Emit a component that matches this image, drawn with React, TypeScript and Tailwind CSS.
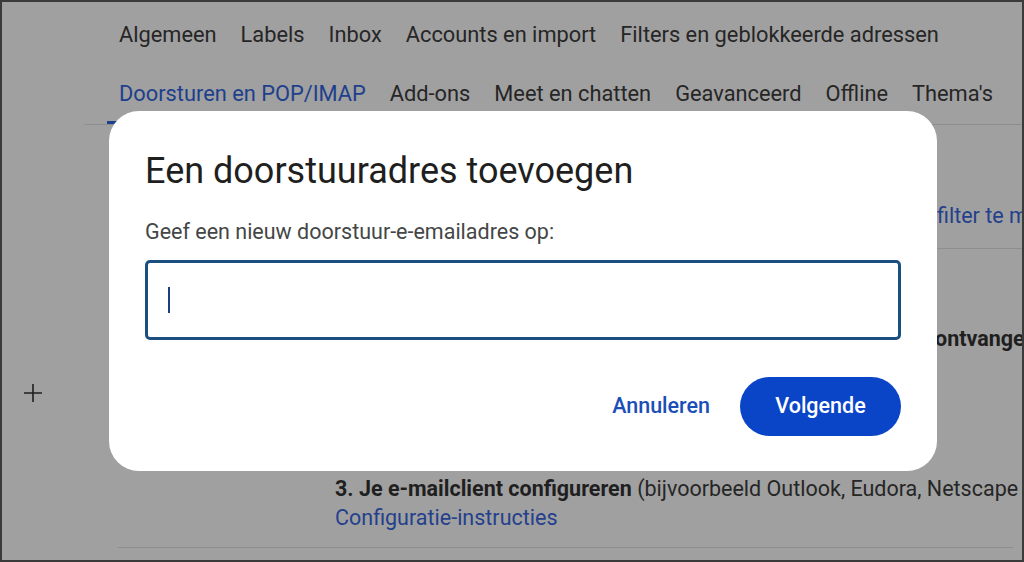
const topTabs = ["Algemeen", "Labels", "Inbox", "Accounts en import", "Filters en geblokkeerde adressen"];
const subTabs = ["Doorsturen en POP/IMAP", "Add-ons", "Meet en chatten", "Geavanceerd", "Offline", "Thema's"];

function PlusIcon() {
  return (
    <svg width="20" height="20" viewBox="0 0 20 20" fill="none" stroke="#1f1f1f" strokeWidth="1.6">
      <path d="M10 1v18M1 10h18" />
    </svg>
  );
}

function ForwardDialog() {
  return (
    <div className="absolute left-[107px] top-[109px] w-[828px] h-[360px] rounded-[30px] bg-white px-[36px] pt-[38px] font-['Roboto',sans-serif]">
      <h2 className="text-[36px] leading-[44px] text-[#1f1f1f] font-normal">Een doorstuuradres toevoegen</h2>
      <p className="mt-[26px] text-[21.5px] leading-[26px] text-[#444746]">Geef een nieuw doorstuur-e-emailadres op:</p>
      <div className="mt-[15px] h-[80px] w-[756px] rounded-[5px] border-[3px] border-[#1b4f80] flex items-center pl-[20px]">
        <span className="block w-[2px] h-[26px] bg-[#1b3f80]" />
      </div>
      <div className="mt-[37px] flex items-center justify-end gap-[30px]">
        <button className="text-[21.5px] font-medium text-[#1b4fb8]">Annuleren</button>
        <button className="h-[59px] w-[161px] rounded-full bg-[#0a45c8] text-[21.5px] font-medium text-white">Volgende</button>
      </div>
    </div>
  );
}

export default function App() {
  return (
    <div className="relative w-[1024px] h-[562px] overflow-hidden border-2 border-[#3a3a3a] bg-[#a0a0a0] font-['Roboto',sans-serif] text-[#262626]">
      <div className="flex h-full">
        <aside className="w-[82px] shrink-0 flex flex-col items-center pt-[381px] pr-[20px]">
          <PlusIcon />
        </aside>

        <main className="flex-1 min-w-0 flex flex-col">
          <div className="border-b border-[#8e8e8e]">
            <nav className="h-[66px] flex items-center pl-[23px] text-[21.8px] whitespace-nowrap">
              {topTabs.map((t) => (
                <span key={t} className="px-[12px]">{t}</span>
              ))}
            </nav>
            <nav className="h-[56px] flex pl-[23px] text-[21.8px] whitespace-nowrap">
              {subTabs.map((t, i) => (
                <span
                  key={t}
                  className={`px-[12px] flex items-center border-b-[3px] ${i === 0 ? "border-[#1e3f8c] text-[#1e3f8c]" : "border-transparent"}`}
                >
                  {t}
                </span>
              ))}
            </nav>
          </div>

          <div className="ml-[251px] flex h-[124px] border-b border-[#8e8e8e] items-center pt-[60px] text-[21.5px] whitespace-nowrap">
            <span className="inline-block w-[602px] shrink-0 overflow-hidden">Tip: je kunt ook alleen bepaalde e-mails doorsturen door een</span>
            <span className="shrink-0 text-[#24408c]">filter te maken.</span>
          </div>

          <div className="flex flex-col pl-[251px] text-[21.5px] whitespace-nowrap">
            <div className="h-[74px]" />
            <div className="flex font-bold text-[#1f1f1f]">
              <span className="inline-block w-[600px] shrink-0 overflow-hidden">Schakel POP in voor e-mail die vanaf nu wordt</span>
              <span className="shrink-0">ontvangen</span>
            </div>
            <div className="h-[119px]" />
            <div className="leading-[29px]">
              <span className="font-bold text-[#1f1f1f]">3. Je e-mailclient configureren</span>{" "}
              <span>(bijvoorbeeld Outlook, Eudora, Netscape Mail)</span>
            </div>
            <div className="leading-[29px] text-[#24408c]">Configuratie-instructies</div>
          </div>
          <div className="mt-[15px] ml-[34px] mr-[9px] border-b border-[#8e8e8e]" />
        </main>
      </div>

      <ForwardDialog />
    </div>
  );
}
